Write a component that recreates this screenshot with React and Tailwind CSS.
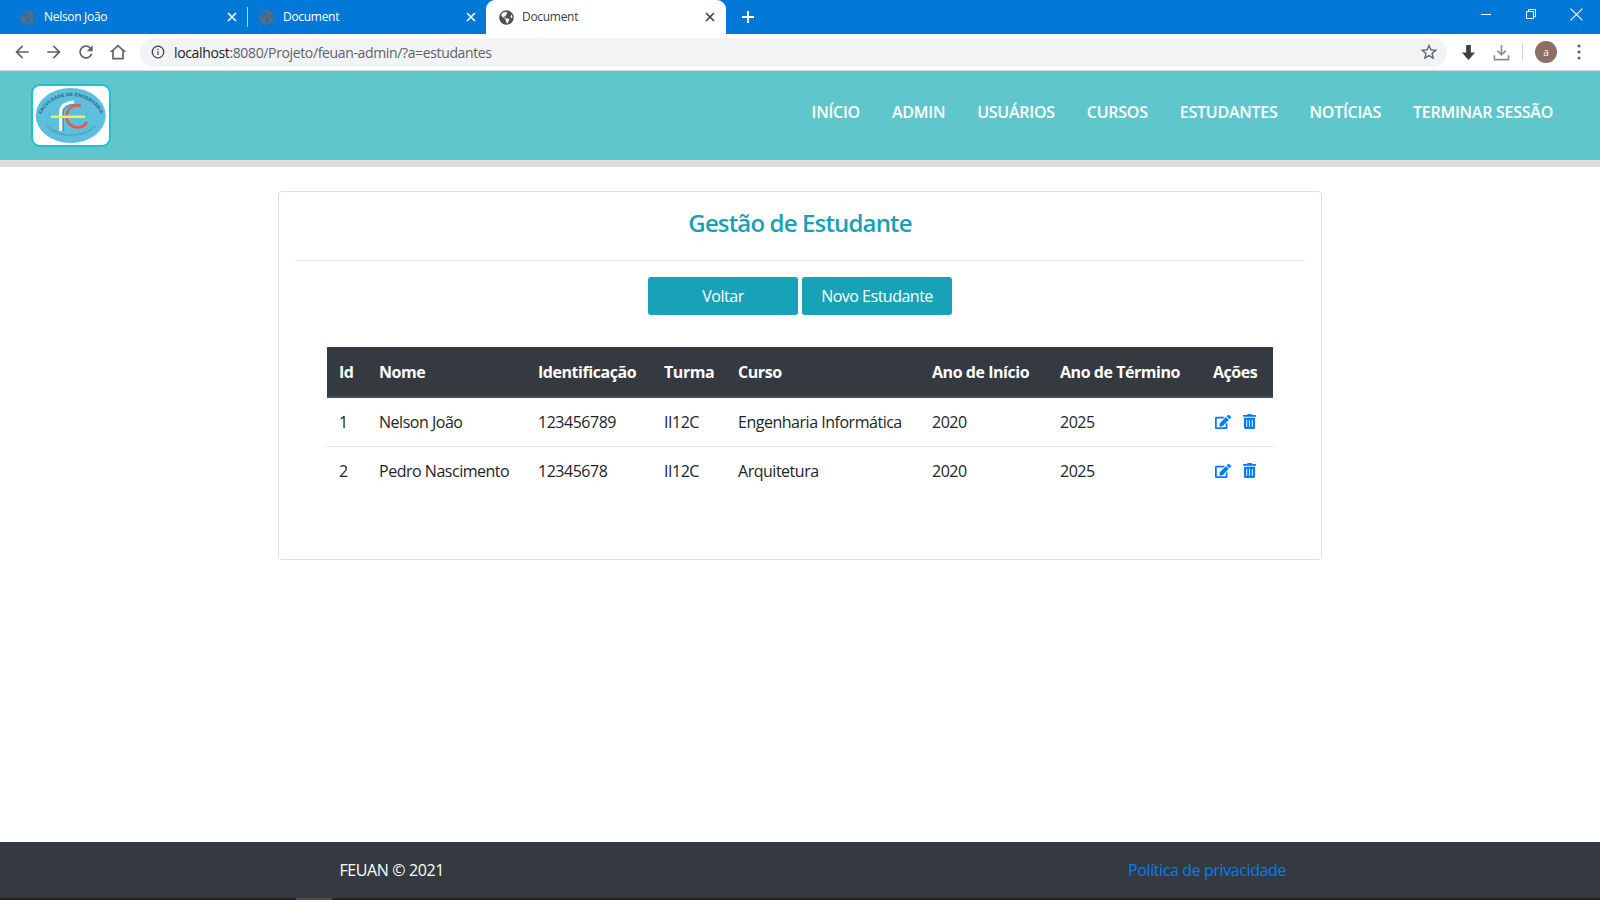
import React from "react";
import { FaEdit, FaTrashAlt, FaGlobeAmericas } from "react-icons/fa";

const ui = "font-['Open_Sans',sans-serif]";

function Tab({ title, active, dim, className, sep }) {
  return (
    <div className={`${className} h-[34px] flex items-center relative ${active ? "bg-white rounded-t-[9px] text-[#3c4043]" : "text-white"}`}>
      <FaGlobeAmericas className={`w-[15px] h-[15px] shrink-0 ${dim ? "text-[#5f6b78]" : "text-[#4b5157]"}`} />
      <span className={`${active ? "ml-[8px]" : "ml-[9px]"} text-[12px] tracking-[-0.3px] flex-1`}>{title}</span>
      <svg viewBox="0 0 10 10" className="w-[10px] h-[10px] shrink-0" stroke="currentColor" strokeWidth="1.6" fill="none">
        <path d="M1 1l8 8M9 1l-8 8" />
      </svg>
      {sep && <div className="absolute right-0 top-[7px] w-px h-[20px] bg-[#b9d7f0]" />}
    </div>
  );
}

function Ico({ d, className = "" }) {
  return (
    <svg viewBox="0 0 24 24" className={`w-[20px] h-[20px] fill-[#5f6368] ${className}`}>
      <path d={d} />
    </svg>
  );
}

function Logo() {
  return (
    <div className="w-[80px] h-[63px] bg-white border-2 border-[#1fc0c8] rounded-[9px] flex items-center justify-center">
      <svg viewBox="0 0 76 59" className="w-[76px] h-[59px]">
        <ellipse cx="37.7" cy="29.5" rx="35" ry="27.5" fill="#5cbfdd" />
        <defs>
          <path id="logoTop" d="M7 36 A31 26 0 0 1 69 36" />
          <path id="logoBot" d="M11 38 A30 22 0 0 0 65 38" />
        </defs>
        <text fontSize="4.6" fill="#2c5c68" fontFamily="'Liberation Sans',sans-serif" fontWeight="700" letterSpacing="0.2">
          <textPath href="#logoTop" startOffset="50%" textAnchor="middle">FACULDADE DE ENGENHARIA</textPath>
        </text>
        <text fontSize="3.2" fill="#3f7f8f" fontFamily="'Liberation Sans',sans-serif">
          <textPath href="#logoBot" startOffset="50%" textAnchor="middle">UNIVERSIDADE AGOSTINHO NETO</textPath>
        </text>
        <path d="M48 20 A11 11 0 1 0 54 36" fill="none" stroke="#e8584f" strokeWidth="2.6" />
        <path d="M27.7 45 V26 Q27.7 17 41 16" fill="none" stroke="#ffffff" strokeWidth="3.2" />
        <path d="M30.2 45 V27 Q30.2 19.5 41 18.5" fill="none" stroke="#66727c" strokeWidth="0.9" />
        <path d="M18 30.7 H52" stroke="#f4ee4e" strokeWidth="2.6" />
      </svg>
    </div>
  );
}

const navItems = ["INÍCIO", "ADMIN", "USUÁRIOS", "CURSOS", "ESTUDANTES", "NOTÍCIAS", "TERMINAR SESSÃO"];

const rows = [
  ["1", "Nelson João", "123456789", "II12C", "Engenharia Informática", "2020", "2025"],
  ["2", "Pedro Nascimento", "12345678", "II12C", "Arquitetura", "2020", "2025"],
];
const heads = ["Id", "Nome", "Identificação", "Turma", "Curso", "Ano de Início", "Ano de Término", "Ações"];
const cols = ["w-[40px]", "w-[159px]", "w-[126px]", "w-[74px]", "w-[194px]", "w-[128px]", "w-[153px]", "w-[72px]"];

export default function App() {
  return (
    <div className={`min-h-screen h-[900px] flex flex-col bg-white ${ui}`}>
      <div className="h-[34px] bg-[#0078d7] flex items-center shrink-0">
        <Tab title="Nelson João" dim className="w-[248px] pl-[20px] pr-[11px]" sep />
        <Tab title="Document" dim className="w-[238px] pl-[11px] pr-[10px]" />
        <Tab title="Document" active className="w-[240px] pl-[13px] pr-[11px]" />
        <svg viewBox="0 0 14 14" className="w-[14px] h-[14px] ml-[15px]" stroke="#fff" strokeWidth="2">
          <path d="M7 1v12M1 7h12" />
        </svg>
        <div className="flex-1" />
        <div className="flex items-center text-white mb-[6px] mr-[17px] gap-[33px]">
          <svg viewBox="0 0 12 12" className="w-[12px] h-[12px]" stroke="#fff" fill="none"><path d="M1 6.5h10" /></svg>
          <svg viewBox="0 0 12 12" className="w-[12px] h-[12px]" stroke="#fff" fill="none"><path d="M1.5 3.5h7v7h-7zM3.5 3.5v-2h7v7h-2" /></svg>
          <svg viewBox="0 0 12 12" className="w-[13px] h-[13px]" stroke="#fff" fill="none"><path d="M.5.5l11 11M11.5.5l-11 11" /></svg>
        </div>
      </div>

      <div className="h-[37px] bg-white flex items-center shrink-0 border-b border-[#d6d8da]">
        <div className="flex items-center w-[140px] pl-[12px] gap-[12px]">
          <Ico d="M20 11H7.83l5.59-5.59L12 4l-8 8 8 8 1.41-1.41L7.83 13H20v-2z" />
          <Ico d="M12 4l-1.41 1.41L16.17 11H4v2h12.17l-5.58 5.59L12 20l8-8z" />
          <Ico d="M17.65 6.35C16.2 4.9 14.21 4 12 4c-4.42 0-7.99 3.58-7.99 8s3.57 8 7.99 8c3.73 0 6.84-2.55 7.73-6h-2.08c-.82 2.33-3.04 4-5.65 4-3.31 0-6-2.69-6-6s2.69-6 6-6c1.66 0 3.14.69 4.22 1.78L13 11h7V4l-2.35 2.35z" />
          <Ico d="M12 3L2 12h3v9h14v-9h3L12 3zm0 2.7l5 4.5V19H7v-8.8l5-4.5z" />
        </div>
        <div className="w-[1307px] h-[29px] rounded-full bg-[#f1f3f4] flex items-center pl-[11px] pr-[8px]">
          <svg viewBox="0 0 16 16" className="w-[14px] h-[14px]" fill="none" stroke="#3c4043" strokeWidth="1.4">
            <circle cx="8" cy="8" r="6.6" />
            <path d="M8 7v4.5M8 4.2v1.5" />
          </svg>
          <span className="ml-[9px] text-[14px] tracking-[-0.36px] flex-1 text-[#5f6368]">
            <span className="text-[#202124]">localhost</span>:8080/Projeto/feuan-admin/?a=estudantes
          </span>
          <Ico d="M22 9.24l-7.19-.62L12 2 9.19 8.63 2 9.24l5.46 4.73L5.82 21 12 17.27 18.18 21l-1.63-7.03L22 9.24zM12 15.4l-3.76 2.27 1-4.28-3.32-2.88 4.38-.38L12 6.1l1.71 4.04 4.38.38-3.32 2.88 1 4.28L12 15.4z" className="w-[18px] h-[18px]" />
        </div>
        <div className="flex items-center pl-[14px]">
          <svg viewBox="0 0 16 18" className="w-[15px] h-[17px]">
            <path d="M5.5 1h5v8H15l-7 8-7-8h4.5z" fill="#3c4043" />
          </svg>
          <svg viewBox="0 0 18 18" className="w-[17px] h-[17px] ml-[17px]" fill="none" stroke="#8a8d90" strokeWidth="1.7">
            <path d="M9 1v10M4.5 7L9 11.5 13.5 7M1.5 12v4.5h15V12" />
          </svg>
          <div className="w-px h-[18px] bg-[#d3d5d7] ml-[12px]" />
          <div className="w-[22px] h-[22px] rounded-full bg-[#8d6e63] text-white text-[10px] flex items-center justify-center ml-[12px]">a</div>
          <svg viewBox="0 0 4 16" className="w-[4px] h-[16px] ml-[21px] fill-[#5f6368] -translate-x-[1px]">
            <circle cx="2" cy="2" r="1.6" /><circle cx="2" cy="8" r="1.6" /><circle cx="2" cy="14" r="1.6" />
          </svg>
        </div>
      </div>

      <header className="h-[89px] bg-[#5fc7cc] flex items-start justify-between pl-[31px] pr-[31px] shrink-0">
        <div className="pt-[13px]"><Logo /></div>
        <nav className="flex items-center h-[81px]">
          {navItems.map((n) => (
            <a key={n} className="px-[16px] text-[16px] font-semibold text-white tracking-[-0.25px] whitespace-nowrap">{n}</a>
          ))}
        </nav>
      </header>
      <div className="h-[7px] bg-[#dcdcdc] shrink-0" />

      <main className="flex-1">
        <section className="w-[1044px] h-[369px] mx-auto mt-[24px] border border-[#dfdfdf] rounded-[4px] px-[16px]">
          <h1 className="h-[69px] flex items-center justify-center text-[24px] font-semibold text-[#1a9fb6] tracking-[-0.85px] border-b border-[#e3e3e3] pb-[6px]">
            Gestão de Estudante
          </h1>
          <div className="flex justify-center gap-[4px] mt-[16px]">
            <button className="w-[150px] h-[38px] bg-[#17a2b8] text-white rounded-[3px] text-[16px] tracking-[-0.5px]">Voltar</button>
            <button className="w-[150px] h-[38px] bg-[#17a2b8] text-white rounded-[3px] text-[16px] tracking-[-0.5px]">Novo Estudante</button>
          </div>
          <table className="table-fixed w-[946px] mx-auto mt-[32px] border-collapse text-[16px] text-[#212529] tracking-[-0.48px]">
            <colgroup>
              {cols.map((c, i) => <col key={i} className={c} />)}
            </colgroup>
            <thead>
              <tr className="h-[50px] bg-[#343a40] text-white border-b-2 border-[#454d55]">
                {heads.map((h) => (
                  <th key={h} className="text-left font-bold whitespace-nowrap tracking-[-0.45px] pl-[12px]">{h}</th>
                ))}
              </tr>
            </thead>
            <tbody>
              {rows.map((r, ri) => (
                <tr key={r[0]} className={`${ri === 0 ? "border-b border-[#dee2e6]" : ""} h-[49px]`}>
                  {r.map((c, i) => (
                    <td key={i} className="whitespace-nowrap pl-[12px]">{c}</td>
                  ))}
                  <td className="pl-[14px]">
                    <div className="flex items-center gap-[12px] text-[#007bff]">
                      <FaEdit className="w-[16px] h-[16px]" />
                      <FaTrashAlt className="w-[13px] h-[15px]" />
                    </div>
                  </td>
                </tr>
              ))}
            </tbody>
          </table>
        </section>
      </main>

      <footer className="h-[56px] bg-[#343a40] flex items-center justify-between pl-[339.5px] pr-[314px] text-[16px] tracking-[-0.4px] shrink-0">
        <span className="text-white">FEUAN © 2021</span>
        <a className="text-[#007bff]">Política de privacidade</a>
      </footer>
      <div className="h-[2px] bg-[#222425] shrink-0 pl-[296px]">
        <div className="w-[36px] h-[2px] bg-[#4a4d50]" />
      </div>
    </div>
  );
}
